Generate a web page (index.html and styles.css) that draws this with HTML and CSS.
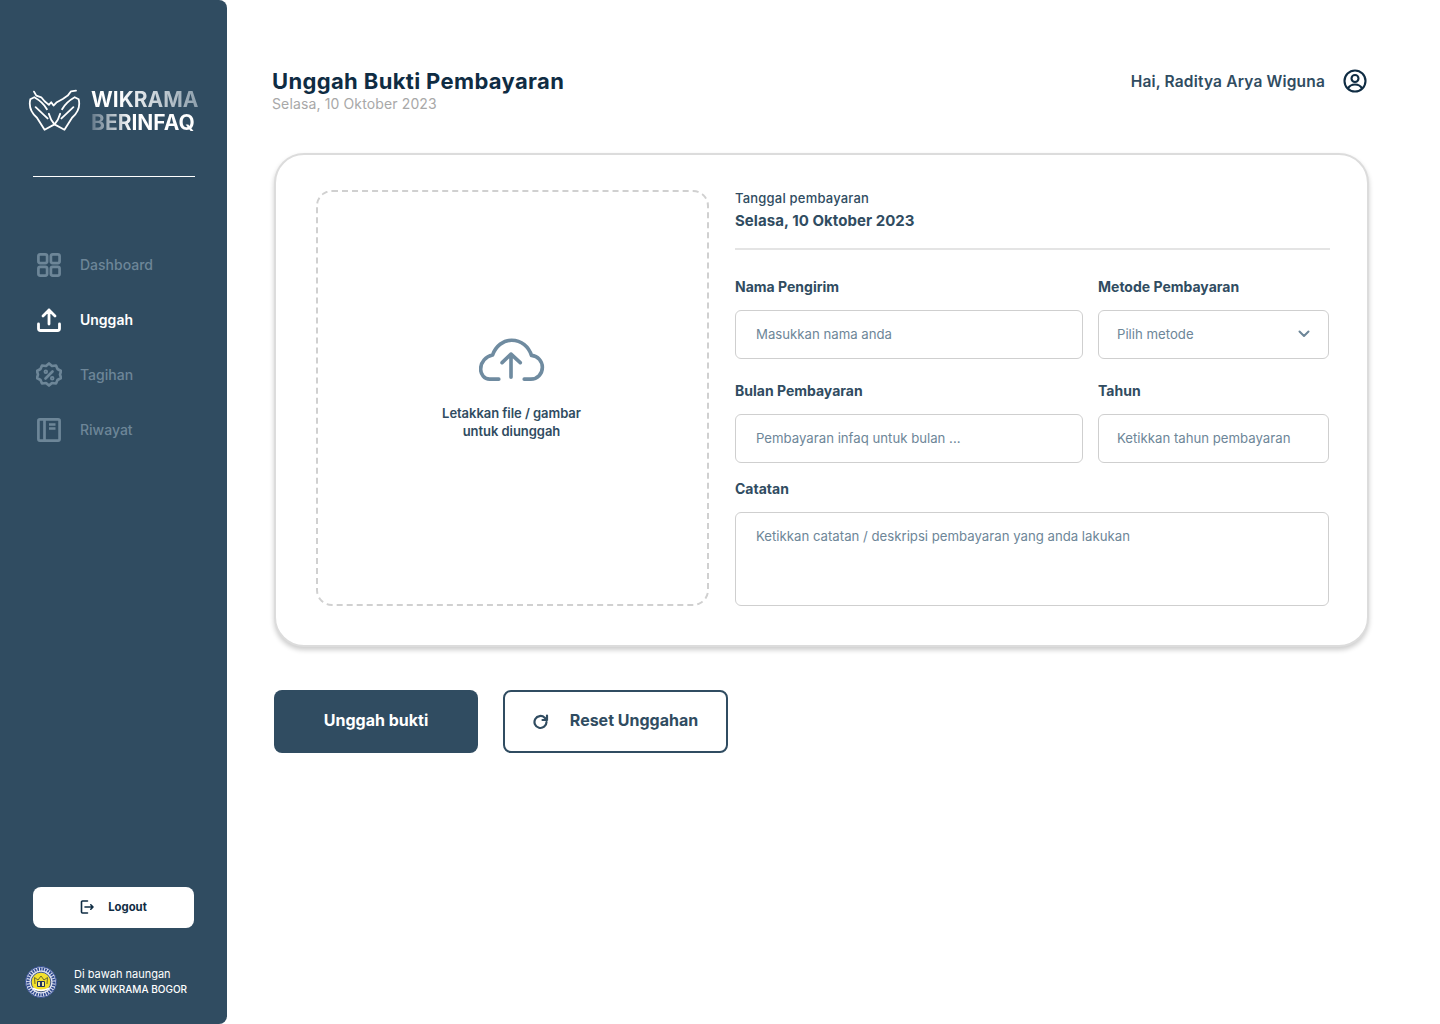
FILE: index.html
```html
<!DOCTYPE html>
<html lang="id">
<head>
<meta charset="utf-8">
<title>Unggah Bukti Pembayaran</title>
<link rel="stylesheet" href="styles.css">
</head>
<body>
<div class="app">
  <aside class="sidebar">
    <div class="brand">
      <svg class="brand-mark" viewBox="85 85 160 130" fill="none" stroke="#fff" stroke-width="5.500" stroke-linejoin="round" stroke-linecap="round">
        <path d="M103 93l7 12 15 5 10 12 13 11 7-8 7 10 10-10 18-10 15-10 10-13 15-2"/>
        <path d="M92 116l12-6c14 8 30 22 38 36M92 116c-6 24 4 42 20 56l23 36 30-16-10-14-7-18M108 140l36 34"/>
        <path d="M238 116l-12-6c-14 8-30 22-38 36M238 116c6 24-4 42-20 56l-23 36-30-16 10-14 7-18M222 140l-36 34"/>
      </svg>
      <div class="brand-name"><span class="brand-top">WIKRAMA</span><span class="brand-bottom">BERINFAQ</span></div>
    </div>
    <div class="divider"></div>
    <nav class="nav">
      <a class="nav-item">
        <svg class="nav-icon" viewBox="0 0 24 24" fill="none" stroke="currentColor" stroke-width="2.700"><rect x="1.400" y="1.400" width="8.700" height="8.700" rx="1.800"/><rect x="13.900" y="1.400" width="8.700" height="8.700" rx="1.800"/><rect x="1.400" y="13.900" width="8.700" height="8.700" rx="1.800"/><rect x="13.900" y="13.900" width="8.700" height="8.700" rx="1.800"/></svg>
        <span>Dashboard</span>
      </a>
      <a class="nav-item is-active">
        <svg class="nav-icon" viewBox="0 0 24 24" fill="none" stroke="currentColor" stroke-width="2.800" stroke-linecap="round" stroke-linejoin="round"><path d="M1.500 16v4.500a2 2 0 0 0 2 2h17a2 2 0 0 0 2-2V16M12 16V2M6 8l6-6 6 6"/></svg>
        <span>Unggah</span>
      </a>
      <a class="nav-item">
        <svg class="nav-icon nav-icon-lg" viewBox="0 0 26 26" fill="none" stroke="currentColor" stroke-width="2.700" stroke-linejoin="round" stroke-linecap="round"><path d="M13 1.500l3 2.500 4-.5 1.500 3.500 3.500 2-1 3.500 1 3.500-3.500 2-1.500 3.500-4-.5-3 2.500-3-2.500-4 .5-1.500-3.500-3.500-2 1-3.500-1-3.500 3.500-2 1.500-3.500 4 .5z"/><path d="M9.500 16.500l7-7"/><circle cx="9.800" cy="9.800" r=".9"/><circle cx="16.200" cy="16.200" r=".9"/></svg>
        <span>Tagihan</span>
      </a>
      <a class="nav-item">
        <svg class="nav-icon" viewBox="0 0 24 24" fill="none" stroke="currentColor" stroke-width="2.700" stroke-linejoin="round"><rect x="1.400" y="1.400" width="21.200" height="21.200" rx="1.500"/><path d="M7.500 1.400v21.200M12 6.500h6.500M12 10.500h6.500"/></svg>
        <span>Riwayat</span>
      </a>
    </nav>
    <button class="logout">
      <svg class="logout-icon" viewBox="0 0 14 14" fill="none" stroke="currentColor" stroke-width="1.600" stroke-linecap="round" stroke-linejoin="round"><path d="M7.500 1H2.500a1 1 0 0 0-1 1v10a1 1 0 0 0 1 1h5M5 7h8M10.800 4.800L13 7l-2.200 2.200"/></svg>
      <span>Logout</span>
    </button>
    <div class="school">
      <svg class="school-logo" viewBox="0 0 32 32">
        <circle cx="16" cy="16" r="15.500" fill="#dfe3ef" stroke="#2f4a8f" stroke-width="1"/>
        <circle cx="16" cy="16" r="13" fill="none" stroke="#2f4a8f" stroke-width="3" stroke-dasharray="1.600 1"/>
        <circle cx="16" cy="16" r="9.800" fill="#f3e02b" stroke="#2f4a8f" stroke-width=".9"/>
        <path d="M10 18l-.5-6.500 3.500 2.500 3-4 3 4 3.500-2.500L22 18" fill="none" stroke="#6a6a2a" stroke-width="1"/>
        <path d="M12.500 15.500h7v5h-7z" fill="#f6ec8a" stroke="#24345f" stroke-width="1"/>
        <path d="M15 15.500h2v5h-2z" fill="#24345f"/>
        <path d="M8 21.500c5 2.500 11 2.500 16 0v1.500c-5 2.800-11 2.800-16 0z" fill="#fff"/>
      </svg>
      <div class="school-text"><span class="school-sub">Di bawah naungan</span><span class="school-name">SMK WIKRAMA BOGOR</span></div>
    </div>
  </aside>

  <main class="main">
    <header class="topbar">
      <div>
        <h1 class="title">Unggah Bukti Pembayaran</h1>
        <p class="date">Selasa, 10 Oktober 2023</p>
      </div>
      <div class="user">
        <span class="user-name">Hai, Raditya Arya Wiguna</span>
        <svg class="user-icon" viewBox="0 0 24 24" fill="none" stroke="currentColor" stroke-width="2.100"><circle cx="12" cy="12" r="10.500"/><circle cx="12" cy="9.500" r="3.500"/><path d="M5 19.500c1.500-3 4-4 7-4s5.500 1 7 4"/></svg>
      </div>
    </header>

    <section class="card">
      <div class="dropzone">
        <svg class="cloud" viewBox="175 55 200 130" fill="none" stroke="#6f8ba0" stroke-width="11" stroke-linecap="round" stroke-linejoin="round">
          <path d="M235 178h-28c-16 0-27-15-27-30 0-22 16-39 36-43 10-27 32-45 58-45 30 0 52 20 60 46 20 2 33 18 33 36 0 20-15 36-35 36h-20"/>
          <path d="M272 172V102M245 128l27-26 28 26"/>
        </svg>
        <p class="drop-text">Letakkan file / gambar<br>untuk diunggah</p>
      </div>
      <div class="details">
        <div class="pay-date">
          <p class="pay-date-label">Tanggal pembayaran</p>
          <p class="pay-date-value">Selasa, 10 Oktober 2023</p>
        </div>
        <div class="form">
          <div class="field"><label class="label">Nama Pengirim</label><div class="input">Masukkan nama anda</div></div>
          <div class="field"><label class="label">Metode Pembayaran</label><div class="input input-short select">Pilih metode
            <svg class="chevron" viewBox="0 0 12 8" fill="none" stroke="currentColor" stroke-width="2" stroke-linecap="round" stroke-linejoin="round"><path d="M1.500 1.500L6 6l4.500-4.500"/></svg></div></div>
          <div class="field"><label class="label">Bulan Pembayaran</label><div class="input">Pembayaran infaq untuk bulan ...</div></div>
          <div class="field"><label class="label">Tahun</label><div class="input input-short">Ketikkan tahun pembayaran</div></div>
          <div class="field field-wide"><label class="label">Catatan</label><div class="input textarea">Ketikkan catatan / deskripsi pembayaran yang anda lakukan</div></div>
        </div>
      </div>
    </section>

    <div class="actions">
      <button class="btn btn-primary">Unggah bukti</button>
      <button class="btn btn-outline">
        <svg class="reset-icon" viewBox="0 0 16 16" fill="none" stroke="currentColor" stroke-width="2.200" stroke-linecap="round" stroke-linejoin="round"><path d="M13.500 8a6 6 0 1 1-1.800-4.300L14 6M14 1.500V6H9.500"/></svg>
        <span>Reset Unggahan</span>
      </button>
    </div>
  </main>
</div>
</body>
</html>
```
FILE: styles.css
```css
* { box-sizing: border-box; }
html, body { margin: 0; height: 100%; background: #fff; }
body { font-family: Inter, "Liberation Sans", sans-serif; color: #304c61; }
p, h1 { margin: 0; }

.app { display: flex; height: 1024px; width: 1440px; overflow: hidden; }

.sidebar {
  width: 227px; flex: none; height: 1024px;
  background: #304c61; border-radius: 0 8px 8px 0;
  display: flex; flex-direction: column;
  padding: 89px 33px 25px;
}
.brand { display: flex; align-items: center; gap: 10px; margin: 0 -4px 0 -5px; height: 44px; }
.brand-mark { width: 53px; height: 43px; flex: none; margin-top: -2px; }
.brand-name { display: flex; flex-direction: column; font-weight: 700; font-size: 21px; line-height: 23px; white-space: nowrap; padding-top: 0; }
.brand-top, .brand-bottom { color: transparent; -webkit-background-clip: text; background-clip: text; width: fit-content; }
.brand-top { background-image: linear-gradient(90deg, #fff 25%, #8d9fac 100%); }
.brand-bottom { background-image: linear-gradient(90deg, #64798a 0%, #fff 40%); }
.divider { height: 1px; background: #fff; margin-top: 43px; width: 162px; }

.nav { display: flex; flex-direction: column; gap: 5px; margin-top: 63px; }
.nav-item { display: flex; align-items: center; height: 50px; gap: 19px; color: #6d8698; font-size: 14px; font-weight: 500; margin-left: 4px; }
.nav-item span { margin-top: -1px; }
.nav-item.is-active { color: #fff; font-weight: 600; }
.nav-icon { width: 24px; height: 24px; flex: none; }
.nav-icon-lg { width: 26px; height: 26px; margin: 0 -1px; }

.logout {
  margin-top: auto; height: 41px; width: 161px;
  border: 0; border-radius: 8px; background: #fff; color: #0f2c43;
  display: flex; align-items: center; justify-content: center; gap: 14px;
  padding: 0 0 2px;
  font: 700 11.300px Inter, "Liberation Sans", sans-serif;
}
.logout-icon { width: 14px; height: 14px; }

.school { display: flex; align-items: center; gap: 16px; margin: 37px -10px 0 -8px; height: 34px; }
.school-logo { width: 32px; height: 32px; flex: none; }
.school-text { display: flex; flex-direction: column; color: #fff; line-height: 15px; white-space: nowrap; margin-left: 1px; }
.school-sub { font-size: 11px; }
.school-name { font-size: 10px; font-weight: 500; }

.main { flex: 1; padding: 69px 72px 0 45px; min-width: 0; }
.topbar { display: flex; justify-content: space-between; height: 84px; }
.title { font-size: 22px; line-height: 24px; font-weight: 700; color: #0f2c43; letter-spacing: .35px; }
.date { font-size: 14px; line-height: 22px; color: #a8a8a8; letter-spacing: .13px; }
.user { display: flex; align-items: flex-start; gap: 18px; height: 24px; margin-right: 1px; }
.user-name { font-size: 15.500px; line-height: 25px; font-weight: 600; color: #304c61; letter-spacing: .17px; }
.user-icon { width: 24px; height: 24px; color: #0f2c43; }

.card {
  margin-left: 2px; width: 1095px; height: 494px;
  background: #fff; border: 2px solid #dcdcdc; border-radius: 30px;
  box-shadow: 0 3px 5px rgba(0,0,0,.2);
  display: flex; gap: 26px; padding: 35px 38px 39px 40px;
}
.dropzone {
  width: 393px; height: 416px; flex: none;
  border: 2px dashed #d0d0d0; border-radius: 16px;
  display: flex; flex-direction: column; align-items: center; padding-top: 146px;
}
.cloud { width: 66px; height: 44px; margin-left: -2px; }
.drop-text { margin-top: 22px; margin-left: -2px; text-align: center; font-size: 13px; line-height: 18px; font-weight: 600; letter-spacing: -.05px; color: #304c61; }

.details { flex: 1; min-width: 0; }
.pay-date { height: 60px; border-bottom: 2px solid #e4e4e4; margin-right: -1px; }
.pay-date-label { font-size: 13px; line-height: 17px; font-weight: 500; color: #304c61; letter-spacing: .2px; padding-bottom: 1px; }
.pay-date-value { font-size: 15px; line-height: 26px; font-weight: 700; color: #304c61; letter-spacing: .05px; }

.form { display: grid; grid-template-columns: 348px 231px; column-gap: 15px; row-gap: 19px; margin-top: 24px; }
.field-wide { grid-column: 1 / -1; margin-top: -6px; }
.label { display: block; font-size: 14px; line-height: 26px; height: 26px; font-weight: 700; color: #304c61; margin-bottom: 10px; }
.input {
  height: 49px; border: 1px solid #cfcfcf; border-radius: 6px;
  padding: 0 20px 1px; display: flex; align-items: center;
  font-size: 13.200px; color: #6d8698; white-space: nowrap;
}
.input-short { padding: 0 18px 1px; }
.select { justify-content: space-between; }
.chevron { width: 12px; height: 8px; color: #6d8698; }
.textarea { height: 94px; align-items: flex-start; padding-top: 15px; width: 594px; }

.actions { display: flex; gap: 25px; margin: 43px 0 0 2px; }
.btn { height: 63px; border-radius: 8px; font: 700 16px Inter, "Liberation Sans", sans-serif; display: flex; align-items: center; justify-content: center; padding: 0 0 3px; }
.btn-primary { width: 204px; background: #304c61; color: #fff; border: 0; }
.btn-outline { width: 225px; background: #fff; color: #304c61; border: 2px solid #304c61; gap: 21px; }
.reset-icon { width: 16px; height: 16px; margin-top: 3px; }
```
